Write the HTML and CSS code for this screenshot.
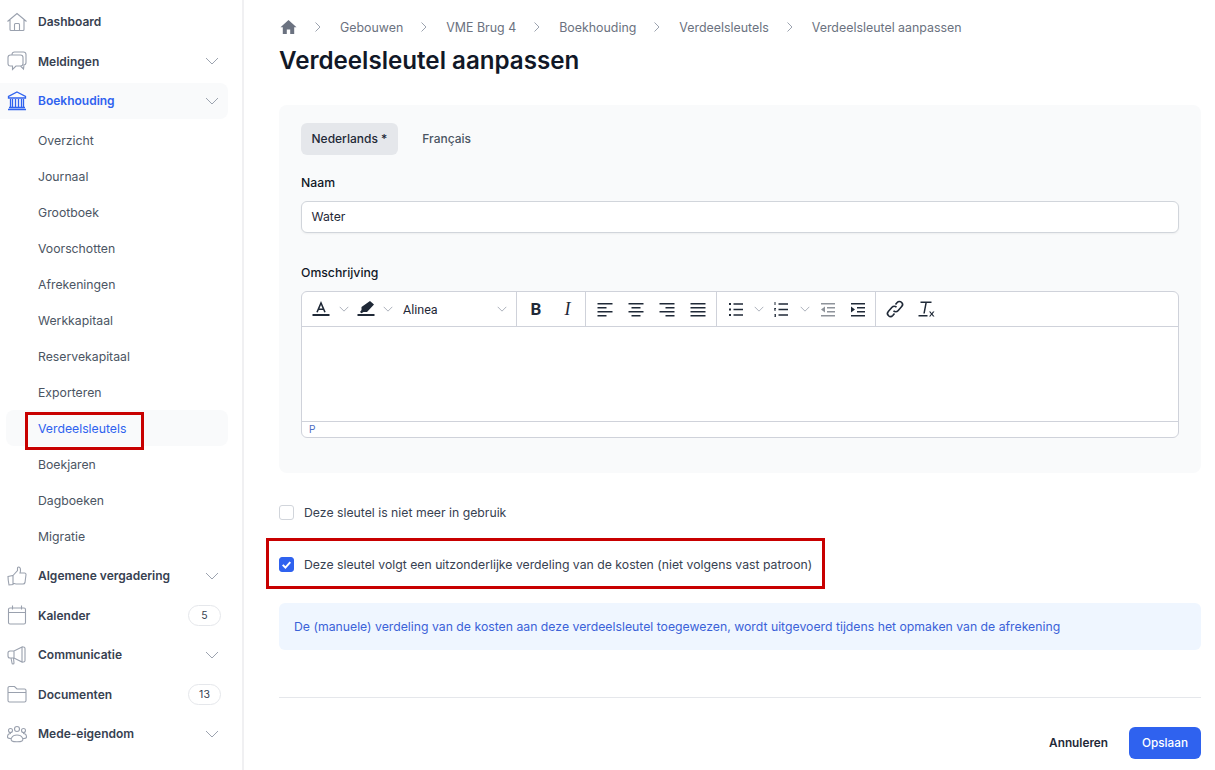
FILE: index.html
```html
<!DOCTYPE html>
<html lang="nl">
<head>
<meta charset="utf-8">
<title>Verdeelsleutel aanpassen</title>
<link rel="stylesheet" href="styles.css">
</head>
<body>
<div class="app">
<aside class="sidebar">
  <svg width="0" height="0" class="defs"><defs>
    <symbol id="chev" viewBox="0 0 14 8"><path d="M1 1l6 6 6-6" fill="none" stroke="currentColor" stroke-width="1"/></symbol>
  </defs></svg>
  <nav class="nav">
    <a class="item first"><svg class="ico" viewBox="0 0 20 20"><path d="M.5 9.500L10 1.500l9.500 8M3 8v9.500a1 1 0 001 1h12a1 1 0 001-1V8M7.500 18.500v-6a1 1 0 011-1h3a1 1 0 011 1v6"/></svg><span>Dashboard</span></a>
    <a class="item"><svg class="ico" viewBox="0 0 20 20"><path d="M5 4V3.500A2.500 2.500 0 017.500 1h9A2.500 2.500 0 0119 3.500v8a2.500 2.500 0 01-2.500 2.500M3.500 4h10a2.500 2.500 0 012.500 2.500v6a2.500 2.500 0 01-2.500 2.500H9l-3.500 3.500V15H3.500A2.500 2.500 0 011 12.500v-6A2.500 2.500 0 013.500 4zM13.500 15l3 3 .5-4"/></svg><span>Meldingen</span><svg class="chev"><use href="#chev"/></svg></a>
    <a class="item active"><svg class="ico blue" viewBox="0 0 20 20"><path d="M10 1l8.500 4.500v1.500h-17V5.500zM3.500 8v8M5.500 8v8M8.500 8v8M11.500 8v8M14.500 8v8M16.500 8v8M2 16.500h16M1 18.500h18"/></svg><span>Boekhouding</span><svg class="chev"><use href="#chev"/></svg></a>
    <div class="sub">
      <a class="subitem">Overzicht</a>
      <a class="subitem">Journaal</a>
      <a class="subitem">Grootboek</a>
      <a class="subitem">Voorschotten</a>
      <a class="subitem">Afrekeningen</a>
      <a class="subitem">Werkkapitaal</a>
      <a class="subitem">Reservekapitaal</a>
      <a class="subitem">Exporteren</a>
      <a class="subitem current">Verdeelsleutels</a>
      <a class="subitem">Boekjaren</a>
      <a class="subitem">Dagboeken</a>
      <a class="subitem">Migratie</a>
    </div>
    <a class="item"><svg class="ico" viewBox="0 0 20 20"><path d="M6 9.500L10.500 4.500V2a1 1 0 011-1c1.500 0 2 1.500 2 3s-.5 3-.5 3h4.500a1.500 1.500 0 011.500 1.700l-1 7.800a2 2 0 01-2 1.500H9c-1.500 0-2-.7-3-.7M6 9.500v8.800M1 10.500l5-1v9l-4 .5c-.6-3-1-5.500-1-8.500z"/></svg><span>Algemene vergadering</span><svg class="chev"><use href="#chev"/></svg></a>
    <a class="item"><svg class="ico" viewBox="0 0 20 20"><path d="M3 3h14a1.500 1.500 0 011.500 1.500v13A1.500 1.500 0 0117 19H3a1.500 1.500 0 01-1.500-1.500v-13A1.500 1.500 0 013 3zM1.500 7.500h17M5.500 .5v4M14.500 .5v4"/></svg><span>Kalender</span><b class="badge">5</b></a>
    <a class="item"><svg class="ico" viewBox="0 0 20 20"><path d="M15 2L7 6H3a2 2 0 00-2 2v3a2 2 0 002 2h4l8 4zM15 2h1.500A1.500 1.500 0 0118 3.500v12a1.500 1.500 0 01-1.500 1.500H15M4 13l1 5a1 1 0 002 0l-.5-5M7 6v7"/></svg><span>Communicatie</span><svg class="chev"><use href="#chev"/></svg></a>
    <a class="item"><svg class="ico" viewBox="0 0 20 20"><path d="M1 4a1.500 1.500 0 011.500-1.500h5L10 5h7.500A1.500 1.500 0 0119 6.500v10a1.500 1.500 0 01-1.500 1.500h-15A1.500 1.500 0 011 16.500zM1 8.500h18"/></svg><span>Documenten</span><b class="badge">13</b></a>
    <a class="item"><svg class="ico" viewBox="0 0 20 20"><circle cx="10" cy="5" r="2.500"/><circle cx="3.500" cy="6.500" r="2"/><circle cx="16.500" cy="6.500" r="2"/><path d="M5 17c-1.500-1-1-6 5-6s6.500 5 5 6-8.500 1-10 0zM4 14.500c-2 0-3.500-.5-3.500-1.500 0-2 1.500-3.500 3.500-3.500M16 14.500c2 0 3.500-.5 3.500-1.500 0-2-1.500-3.500-3.500-3.500"/></svg><span>Mede-eigendom</span><svg class="chev"><use href="#chev"/></svg></a>
  </nav>
  <div class="marker marker-nav"></div>
</aside>
<main class="main">
  <div class="crumbs">
    <svg class="home" viewBox="0 0 16 16"><path d="M8 1L0 8.300h2.300V15h4v-4.500h3.400V15h4V8.300H16z"/></svg>
    <svg class="sep" viewBox="0 0 6 10"><path d="M.5.500L5 5 .5 9.500"/></svg><span>Gebouwen</span>
    <svg class="sep" viewBox="0 0 6 10"><path d="M.5.500L5 5 .5 9.500"/></svg><span>VME Brug 4</span>
    <svg class="sep" viewBox="0 0 6 10"><path d="M.5.500L5 5 .5 9.500"/></svg><span>Boekhouding</span>
    <svg class="sep" viewBox="0 0 6 10"><path d="M.5.500L5 5 .5 9.500"/></svg><span>Verdeelsleutels</span>
    <svg class="sep" viewBox="0 0 6 10"><path d="M.5.500L5 5 .5 9.500"/></svg><span>Verdeelsleutel aanpassen</span>
  </div>
  <h1 class="title">Verdeelsleutel aanpassen</h1>
  <section class="card">
    <div class="tabs"><span class="tab on">Nederlands *</span><span class="tab">Français</span></div>
    <label class="label l1">Naam</label>
    <div class="input">Water</div>
    <label class="label l2">Omschrijving</label>
    <div class="editor">
      <div class="toolbar">
        <div class="group g1">
          <svg class="t" viewBox="0 0 20 20"><path class="s" d="M6 13.200L10 4l4 9.200M7.300 10.200h5.400"/><rect class="f" x="1.500" y="15" width="17" height="2"/></svg>
          <svg class="tc c-a"><use href="#chev"/></svg>
          <svg class="t t-pen" viewBox="0 0 20 20"><path class="f" d="M14 2l4 3.500-7 7.500H7.500L5.500 14.300 4 13l1.500-2V8zM1.500 15h17v2h-17z"/></svg>
          <svg class="tc c-b"><use href="#chev"/></svg>
          <span class="para">Alinea</span>
          <svg class="tc last"><use href="#chev"/></svg>
        </div>
        <div class="group g2">
          <span class="bold">B</span><span class="ital">I</span>
        </div>
        <div class="group g3">
          <svg class="t" viewBox="0 0 20 20"><path class="f" d="M2.500 4h15v1.500h-15zM2.500 8h9v1.500h-9zM2.500 12h15v1.500h-15zM2.500 16h9v1.500h-9z"/></svg>
          <svg class="t" viewBox="0 0 20 20"><path class="f" d="M2.500 4h15v1.500h-15zM5.500 8h9v1.500h-9zM2.500 12h15v1.500h-15zM5.500 16h9v1.500h-9z"/></svg>
          <svg class="t" viewBox="0 0 20 20"><path class="f" d="M2.500 4h15v1.500h-15zM8.500 8h9v1.500h-9zM2.500 12h15v1.500h-15zM8.500 16h9v1.500h-9z"/></svg>
          <svg class="t" viewBox="0 0 20 20"><path class="f" d="M2.500 4h15v1.500h-15zM2.500 8h15v1.500h-15zM2.500 12h15v1.500h-15zM2.500 16h15v1.500h-15z"/></svg>
        </div>
        <div class="group g4">
          <svg class="t" viewBox="0 0 20 20"><path class="f" d="M3 4h2v2H3zM3 9.500h2v2H3zM3 15h2v2H3zM7.500 4.200H17v1.500H7.500zM7.500 9.700H17v1.500H7.500zM7.500 15.200H17v1.500H7.500z"/></svg>
          <svg class="tc c-l1"><use href="#chev"/></svg>
          <svg class="t t-num" viewBox="0 0 20 20"><path class="f" d="M3.500 3h1v3h-1zM3 9h2v.8l-1 1h1v.8H3v-.8l1-1H3zM3 15h2v3H3v-.6h1.200v-.6h-1v-.6h1v-.6H3zM7.500 4.200H17v1.500H7.500zM7.500 9.700H17v1.500H7.500zM7.500 15.200H17v1.500H7.500z"/></svg>
          <svg class="tc c-l2"><use href="#chev"/></svg>
          <svg class="t dim" viewBox="0 0 20 20"><path class="f" d="M3 4h14v1.500H3zM9 8h8v1.500H9zM9 12h8v1.500H9zM3 16h14v1.500H3zM7 7.500v6l-4-3z"/></svg>
          <svg class="t t-in" viewBox="0 0 20 20"><path class="f" d="M3 4h14v1.500H3zM9 8h8v1.500H9zM9 12h8v1.500H9zM3 16h14v1.500H3zM3 7.500v6l4-3z"/></svg>
        </div>
        <div class="group g5">
          <svg class="t" viewBox="0 0 20 20"><path class="s" d="M8.500 11.800a3 3 0 004.500 0l3.700-4.300a3 3 0 00-4.500-4L10.500 5.500M11.500 8.200a3 3 0 00-4.500 0l-3.700 4.300a3 3 0 004.500 4l1.700-2"/></svg>
          <svg class="t" viewBox="0 0 20 20"><path class="f" d="M4.500 2.500h11V4h-4.700L8.800 14.500H7.300L9.300 4H4.500zM2.500 16h9v1.500h-9zM13 12.500h1.500l1.200 1.700 1.300-1.700h1.500l-2 2.500 2 2.500H17l-1.300-1.700-1.200 1.700H13l2-2.500z"/></svg>
        </div>
      </div>
      <div class="edit-area"></div>
      <div class="status">P</div>
    </div>
  </section>
  <div class="check c1"><span class="box"></span><span>Deze sleutel is niet meer in gebruik</span></div>
  <div class="check c2">
    <span class="box on"><svg viewBox="0 0 12 12"><path d="M2.500 6.300l2.500 2.500 4.500-5"/></svg></span><span>Deze sleutel volgt een uitzonderlijke verdeling van de kosten (niet volgens vast patroon)</span>
    <div class="marker marker-check"></div>
  </div>
  <div class="info">De (manuele) verdeling van de kosten aan deze verdeelsleutel toegewezen, wordt uitgevoerd tijdens het opmaken van de afrekening</div>
  <hr class="rule">
  <div class="actions"><span class="cancel">Annuleren</span><span class="save">Opslaan</span></div>
</main>
</div>
</body>
</html>
```
FILE: styles.css
```css
* { box-sizing: border-box; }
html, body { margin: 0; height: 100%; overflow: hidden; background: #fff; }
body { font-family: Inter, "Liberation Sans", sans-serif; font-size: 12.25px; color: #374151; }
.app { display: flex; width: 1215px; height: 770px; }
.defs { position: absolute; }
.sidebar { position: relative; width: 244px; flex: none; border-right: 2px solid #f0f0f2; }
.nav { display: flex; flex-direction: column; padding-top: 1.750px; width: 228px; }
.item { display: flex; align-items: center; height: 39.500px; padding: 0 9px 0 7px; font-weight: 600; font-size: 12px; color: #374151; }
.item.active { height: 36px; margin: 2.250px 0 3px; padding-bottom: 1px; color: #2f62ef; background: #f9fafb; border-radius: 0 8px 8px 0; }
.item > span { flex: 1; margin-left: 11px; }
.ico { width: 20px; height: 20px; flex: none; fill: none; stroke: #9aa1ae; stroke-width: 1.100; }
.ico.blue { stroke: #2f62ef; stroke-width: 1.300; }
.chev { width: 14px; height: 8px; color: #9ca3af; flex: none; }
.sub { display: flex; flex-direction: column; margin-bottom: 1.750px; }
.subitem { display: flex; align-items: center; height: 36px; padding-left: 38px; font-size: 12.250px; color: #4b5563; }
.subitem.current { margin-left: 6px; padding-left: 32px; color: #2f62ef; background: #f9fafb; border-radius: 8px; }
.badge { width: 33px; height: 21px; margin-right: -2px; border: 1px solid #e5e7eb; border-radius: 11px; display: flex; align-items: center; justify-content: center; font-size: 10.500px; font-weight: 400; color: #374151; }
.marker { position: absolute; border: 3px solid #c80000; pointer-events: none; }
.marker-nav { left: 25px; top: 412px; width: 119px; height: 38px; }
.main { flex: 1; padding: 0 14px 0 35px; min-width: 0; }
.crumbs { display: flex; align-items: center; height: 16px; margin-top: 19px; color: #6b7280; font-size: 12.400px; }
.home { width: 17px; height: 16px; fill: #6b7280; flex: none; margin-left: 1px; }
.sep { width: 6px; height: 10px; fill: none; stroke: #9ca3af; stroke-width: 1; margin: 0 19px 0 18px; flex: none; }
.title { margin: 8px 0 0; font-size: 24.150px; line-height: 36px; font-weight: 600; color: #111827; }
.card { margin-top: 26px; height: 368px; background: #f9fafb; border-radius: 8px; padding: 18px 22px; }
.tabs { display: flex; gap: 14px; }
.tab { display: flex; align-items: center; height: 32px; padding: 0 10.500px 1px; border-radius: 6px; color: #4b5563; font-size: 12px; font-weight: 500; }
.tab.on { background: #e5e7eb; color: #1f2937; }
.label { display: block; color: #111827; font-weight: 450; line-height: 18px; }
.l1 { margin-top: 19px; }
.l2 { margin-top: 31px; }
.input { margin-top: 9px; height: 32px; background: #fff; border: 1px solid #d1d5db; border-radius: 6px; padding: 0 9.500px 1px; display: flex; align-items: center; color: #1f2937; box-shadow: 0 1px 2px rgba(0,0,0,.05); }
.editor { margin-top: 9px; height: 147px; background: #fff; border: 1px solid #cfd2da; border-radius: 6px; display: flex; flex-direction: column; overflow: hidden; }
.toolbar { display: flex; height: 35px; border-bottom: 1px solid #cfd2da; flex: none; }
.group { display: flex; align-items: center; border-right: 1px solid #cfd2da; height: 100%; flex: none; }
.group:last-child { border-right: 0; }
.t { width: 20px; height: 20px; flex: none; }
.t.dim { opacity: .5; margin-left: 8px; }
.f { fill: #1f2937; }
.s { fill: none; stroke: #1f2937; stroke-width: 1.600; }
.tc { width: 10px; height: 6px; color: #8b92a0; flex: none; }
.g1 { width: 215px; padding-left: 8.500px; }
.c-a { margin-left: 8.500px; }
.t-pen { margin-left: 6.500px; }
.c-b { margin-left: 7.500px; }
.para { flex: 1; font-family: Roboto, "Liberation Sans", sans-serif; font-size: 12.500px; color: #1f2937; margin-left: 10px; }
.tc.last { margin-right: 9px; }
.g2 { width: 69px; padding-left: 9px; gap: 14.500px; }
.bold { font-family: Roboto, sans-serif; font-weight: 700; font-size: 17px; color: #1f2937; width: 20px; text-align: center; }
.ital { font-family: "Liberation Serif", serif; font-style: italic; font-size: 18px; color: #1f2937; width: 14px; text-align: center; }
.g3 { width: 131px; padding-left: 8.500px; gap: 11px; }
.g4 { width: 159px; padding-left: 9px; }
.c-l1 { margin-left: 8px; }
.t-num { margin-left: 7px; }
.c-l2 { margin-left: 9px; }
.t-in { margin-left: 9.500px; }
.g5 { padding-left: 9px; gap: 10.500px; }
.edit-area { flex: 1; }
.status { height: 16px; flex: none; border-top: 1px solid #cfd2da; padding-left: 7px; font-size: 10px; line-height: 15px; color: #4f6fc4; font-family: Roboto, sans-serif; }
.check { display: flex; align-items: center; gap: 10px; color: #374151; }
.c1 { margin-top: 31px; height: 16px; }
.c2 { position: relative; margin-top: 36px; height: 16px; }
.box { width: 15px; height: 15px; flex: none; background: #fff; border: 1px solid #d1d5db; border-radius: 3px; display: flex; }
.box.on { background: #2f62ef; border-color: #2f62ef; }
.box svg { fill: none; stroke: #fff; stroke-width: 1.800; width: 13px; height: 13px; }
.marker-check { left: -13px; top: -18px; width: 559px; height: 51px; }
.info { margin-top: 31px; height: 47px; display: flex; align-items: center; padding: 0 15px; background: #eff6ff; border-radius: 6px; color: #3b62d8; }
.rule { margin: 47px 0 0; border: 0; border-top: 1px solid #e5e7eb; }
.actions { display: flex; justify-content: flex-end; align-items: center; gap: 21px; margin-top: 29px; }
.cancel { font-weight: 600; font-size: 11.800px; color: #1f2937; }
.save { display: flex; align-items: center; height: 32px; padding: 0 13px; background: #2f62ef; color: #fff; border-radius: 6px; font-weight: 500; font-size: 11.750px; }
```
